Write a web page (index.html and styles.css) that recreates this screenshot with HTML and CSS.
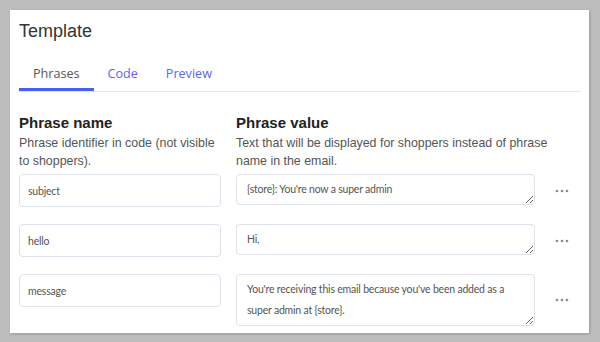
FILE: index.html
```html
<!DOCTYPE html>
<html lang="en">
<head>
  <meta charset="UTF-8" />
  <meta name="viewport" content="width=device-width, initial-scale=1.0" />
  <title>Template</title>
  <link rel="stylesheet" href="styles.css">
</head>
<body>

  <div class="card">
    <h1 class="card-title">Template</h1>

    <!-- Tabs -->
    <div class="tabs">
      <a class="tab active">Phrases</a>
      <a class="tab">Code</a>
      <a class="tab">Preview</a>
    </div>

    <!-- Column headings -->
    <div class="phrase-head">
      <div>
        <h3>Phrase name</h3>
        <p class="hint">Phrase identifier in code (not visible to shoppers).</p>
      </div>
      <div>
        <h3>Phrase value</h3>
        <p class="hint hint-wide">Text that will be displayed for shoppers instead of phrase name in the email.</p>
      </div>
    </div>

    <!-- Phrase rows -->
    <div class="phrase-list">
      <input class="phrase-name" type="text" value="subject" />
      <textarea class="phrase-value">{store}: You're now a super admin</textarea>
      <button class="more"><svg width="14" height="4" viewBox="0 0 14 4"><circle cx="2" cy="2" r="1.3"/><circle cx="7" cy="2" r="1.3"/><circle cx="12" cy="2" r="1.3"/></svg></button>

      <input class="phrase-name" type="text" value="hello" />
      <textarea class="phrase-value">Hi,</textarea>
      <button class="more"><svg width="14" height="4" viewBox="0 0 14 4"><circle cx="2" cy="2" r="1.3"/><circle cx="7" cy="2" r="1.3"/><circle cx="12" cy="2" r="1.3"/></svg></button>

      <input class="phrase-name" type="text" value="message" />
      <textarea class="phrase-value tall">You're receiving this email because you've been added as a super admin at {store}.</textarea>
      <button class="more"><svg width="14" height="4" viewBox="0 0 14 4"><circle cx="2" cy="2" r="1.3"/><circle cx="7" cy="2" r="1.3"/><circle cx="12" cy="2" r="1.3"/></svg></button>
    </div>
  </div>

</body>
</html>
```

FILE: styles.css
```css
body {
  font-family: "Liberation Sans", Arial, sans-serif;
  background-color: #bdbdbd;
  margin: 0;
  padding: 10px;
}

.card {
  background: white;
  width: 579px;
  box-sizing: border-box;
  padding: 10px 8px 7px 9px;
  box-shadow: 1px 1px 3px rgba(0, 0, 0, 0.2);
}

.card-title {
  font-size: 18px;
  font-weight: normal;
  line-height: 22px;
  color: #333;
  margin: 0;
}

/* Tabs */
.tabs {
  display: flex;
  margin-top: 18px;
  border-bottom: 1px solid #e6e6e6;
}

.tab {
  font-family: "Open Sans", sans-serif;
  font-size: 12.6px;
  line-height: 18px;
  padding: 5px 14px 5px;
  color: #5d63f0;
  border-bottom: 3px solid transparent;
  cursor: pointer;
}

.tab.active {
  color: #555;
  border-bottom-color: #4561f2;
}

/* Headings */
.phrase-head,
.phrase-list {
  display: grid;
  grid-template-columns: 202px 299px 1fr;
  column-gap: 15px;
}

.phrase-head {
  margin-top: 22px;
  margin-bottom: 4px;
}

.phrase-head h3 {
  font-size: 15px;
  line-height: 18px;
  color: #222;
  margin: 0 0 2px;
}

.hint {
  font-size: 12.4px;
  line-height: 18px;
  color: #555;
  margin: 0;
}

.hint-wide {
  width: 330px;
}

/* Rows */
.phrase-list {
  row-gap: 17px;
  align-items: start;
}

.phrase-name,
.phrase-value {
  font-family: Lato, sans-serif;
  font-size: 10.5px;
  letter-spacing: -0.2px;
  color: #555;
  border: 1px solid #dfe1ea;
  border-radius: 4px;
  box-sizing: border-box;
  margin: 0;
}

.phrase-name {
  height: 33px;
  padding: 0 8px;
}

.phrase-value {
  line-height: 21px;
  padding: 4px 10px;
  height: 31px;
  resize: vertical;
  overflow: hidden;
}

.phrase-value.tall {
  height: 52px;
}

.more {
  align-self: center;
  justify-self: start;
  margin-left: 5px;
  background: none;
  border: none;
  padding: 0;
  fill: #8a8a8a;
  cursor: pointer;
  line-height: 0;
}
```
